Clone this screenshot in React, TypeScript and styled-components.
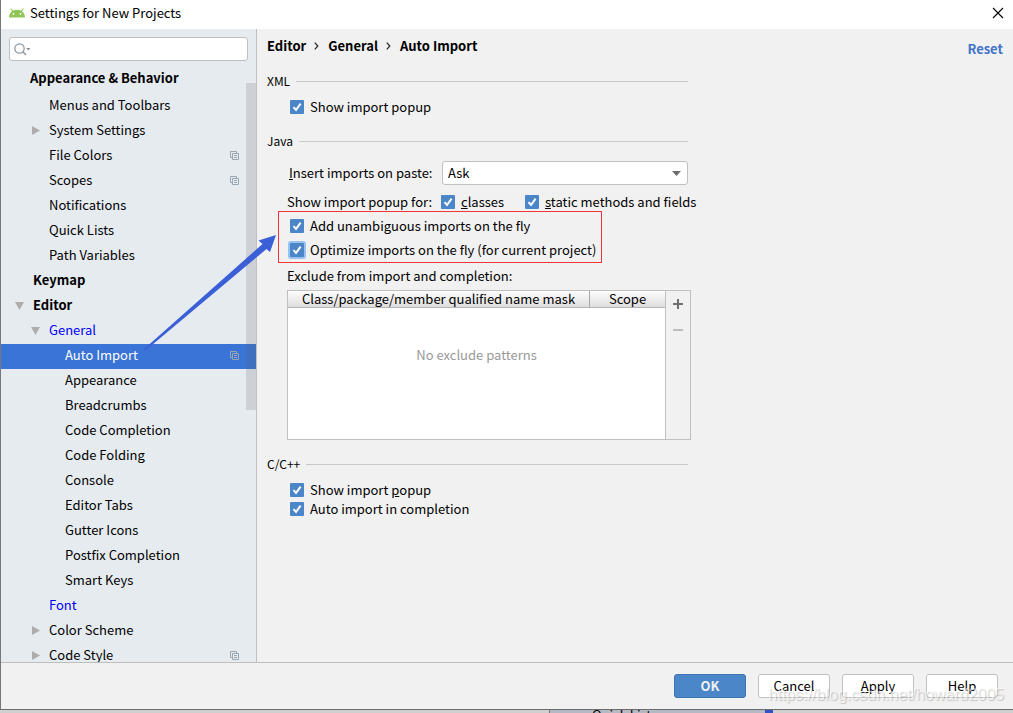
import React from "react";
import styled, { createGlobalStyle, css } from "styled-components";

const GlobalStyle = createGlobalStyle`
  *, *::before, *::after { box-sizing: border-box; }
  body {
    margin: 0;
    font-family: "Noto Sans CJK SC", "Noto Sans", sans-serif;
    font-size: 13px;
    line-height: 18px;
    color: #000;
  }
  button, input, select { font: inherit; color: inherit; }
`;

const Desktop = styled.div`
  position: relative;
  display: flex;
  flex-direction: column;
  height: 100vh;
  padding-bottom: 3px;
  overflow: hidden;
  background: #cfcfd0;
`;

const Dialog = styled.div`
  position: relative;
  z-index: 1;
  flex: 1;
  min-height: 0;
  display: flex;
  flex-direction: column;
  background: #f1f1f1;
  border-left: 1px solid #77787a;
  border-bottom: 1px solid #6c6c6c;
`;

const TitleBar = styled.header`
  display: flex;
  align-items: center;
  gap: 5px;
  height: 29px;
  flex: none;
  padding: 0 9px 3px 8px;
  background: #fff;
`;

const Title = styled.h1`
  flex: 1;
  margin: 0;
  font-size: 13px;
  line-height: 18px;
  font-weight: 400;
`;

const IconButton = styled.button`
  display: flex;
  align-items: center;
  justify-content: center;
  padding: 0;
  border: 0;
  background: none;
`;

const Main = styled.div`
  flex: 1;
  min-height: 0;
  display: flex;
`;

const Sidebar = styled.nav`
  position: relative;
  flex: none;
  width: 256px;
  overflow: hidden;
  background: #e6ebf0;
  border-right: 1px solid #bfc0c2;
`;

const SearchBox = styled.label`
  display: flex;
  align-items: center;
  height: 24px;
  margin: 8px 8px 4px;
  padding: 0 4px;
  background: #fff;
  border: 1px solid #c0c0c0;
  border-radius: 3px;
`;

const SearchInput = styled.input`
  flex: 1;
  min-width: 0;
  border: 0;
  outline: 0;
  background: none;
`;

const Tree = styled.ul`
  margin: 0;
  padding: 0;
  list-style: none;
`;

const indents = { top: 29, root: 32, child: 48, leaf: 64 };
type Level = keyof typeof indents;

const TreeRow = styled.li<{ $level: Level; $selected?: boolean }>`
  display: flex;
  align-items: center;
  height: ${(p) => (p.$level === "top" ? 29 : 25)}px;
  padding-right: 17px;
  padding-bottom: 3px;
  background: ${(p) => (p.$selected ? "#3974d6" : "transparent")};
  color: ${(p) => (p.$selected ? "#fff" : "#000")};
`;

const Twisty = styled.span<{ $level: Level }>`
  display: flex;
  justify-content: flex-end;
  flex: none;
  width: ${(p) => indents[p.$level]}px;
  padding-right: 9px;
`;

const TreeLink = styled.a<{ $bold?: boolean; $modified?: boolean }>`
  flex: 1;
  white-space: nowrap;
  text-decoration: none;
  font-weight: ${(p) => (p.$bold ? 700 : 400)};
  color: ${(p) => (p.$modified ? "#0000ff" : "inherit")};
`;

const ScrollThumb = styled.div`
  position: absolute;
  top: 54px;
  right: 0;
  width: 10px;
  height: 327px;
  background: rgba(94, 94, 94, 0.18);
`;

const Content = styled.main`
  flex: 1;
  min-width: 0;
  padding: 8px 10px 0;
`;

const TopLine = styled.div`
  display: flex;
  justify-content: space-between;
  align-items: flex-start;
  height: 34px;
`;

const Breadcrumb = styled.ol`
  display: flex;
  gap: 9px;
  margin: 0;
  padding: 0;
  list-style: none;
  font-weight: 700;
`;

const Crumb = styled.li`
  display: flex;
  align-items: center;
  gap: 8px;
`;

const ResetLink = styled.a`
  padding-top: 3px;
  font-weight: 700;
  color: #4274c8;
  text-decoration: none;
`;

const Form = styled.form`
  max-width: 424px;
`;

const Section = styled.fieldset`
  margin: 0;
  padding: 0;
  border: 0;
  min-width: 0;
`;

const SectionTitle = styled.legend`
  display: flex;
  align-items: center;
  gap: 6px;
  width: 100%;
  height: 20px;
  padding: 0 3px 0 0;
  font-size: 12px;
  &::after {
    content: "";
    flex: 1;
    height: 1px;
    background: #c9c9c9;
  }
`;

const CheckList = styled.div<{ $top: number; $bottom?: number }>`
  padding: ${(p) => p.$top}px 0 ${(p) => p.$bottom ?? 0}px 23px;
`;

const Check = styled.label<{ $height: number }>`
  display: flex;
  align-items: center;
  gap: 6px;
  height: ${(p) => p.$height}px;
  white-space: nowrap;
`;

const tick = css`
  background-image: url("data:image/svg+xml,%3Csvg xmlns='http://www.w3.org/2000/svg' width='14' height='14'%3E%3Cpath d='M3.5 7.2 6 10 10.6 3.6' fill='none' stroke='white' stroke-width='2'/%3E%3C/svg%3E");
`;

const CheckInput = styled.input.attrs({ type: "checkbox" })<{ $focused?: boolean }>`
  appearance: none;
  flex: none;
  width: 14px;
  height: 14px;
  margin: 0;
  border: 0;
  border-radius: 1px;
  background-color: #fff;
  box-shadow: ${(p) => (p.$focused ? "0 0 0 2px #97c3f3" : "none")};
  &:checked {
    background-color: #4a86c8;
    ${tick}
  }
`;

const PasteRow = styled.div`
  display: grid;
  grid-template-columns: 153px 1fr;
  align-items: center;
  height: 24px;
  margin: 10px 3px 8px 22px;
`;

const SelectWrap = styled.span`
  position: relative;
  display: flex;
`;

const Select = styled.select`
  appearance: none;
  width: 100%;
  height: 24px;
  padding: 0 20px 0 5px;
  background: #fff;
  border: 1px solid #c0c0c0;
  border-radius: 3px;
`;

const SelectArrow = styled.svg`
  position: absolute;
  right: 7px;
  top: 10px;
  pointer-events: none;
`;

const PopupRow = styled.div`
  display: grid;
  grid-template-columns: 154px 84px auto;
  align-items: center;
  height: 18px;
  margin-left: 20px;
  white-space: nowrap;
`;

const Highlight = styled.div`
  width: 324px;
  margin-left: 11px;
  padding: 2px 0 0 11px;
  border: 1px solid #f0353b;
`;

const ExcludeLabel = styled.div`
  height: 27px;
  padding: 4px 0 0 20px;
`;

const ExcludePanel = styled.div`
  display: flex;
  height: 150px;
  margin: 0 0 14px 20px;
  border: 1px solid #c0c0c0;
`;

const ExcludeTable = styled.table`
  flex: 1;
  height: 148px;
  border-collapse: separate;
  border-spacing: 0;
  table-layout: fixed;
  background: #fff;
`;

const HeadCell = styled.th<{ $width?: number }>`
  width: ${(p) => (p.$width ? `${p.$width}px` : "auto")};
  height: 17px;
  padding: 0;
  font-weight: 400;
  line-height: 16px;
  background: linear-gradient(#fdfdfd, #dedede);
  border-bottom: 1px solid #b5b5b5;
  & + & { border-left: 1px solid #a8a8a8; }
`;

const EmptyCell = styled.td`
  padding: 0 0 38px;
  text-align: center;
  color: #999;
`;

const TableTools = styled.div`
  display: flex;
  flex-direction: column;
  align-items: center;
  gap: 16px;
  width: 25px;
  padding-top: 8px;
  border-left: 1px solid #c0c0c0;
`;

const Footer = styled.footer`
  position: relative;
  flex: none;
  display: flex;
  justify-content: flex-end;
  gap: 12px;
  height: 47px;
  padding: 11px 15px 0;
  border-top: 1px solid #bfbfbf;
`;

const Button = styled.button<{ $primary?: boolean }>`
  width: 72px;
  height: 24px;
  padding: 0;
  border: 1px solid ${(p) => (p.$primary ? "#3d75b3" : "#c0c0c0")};
  border-radius: 3px;
  background: ${(p) => (p.$primary ? "#4a86c8" : "#fff")};
  color: ${(p) => (p.$primary ? "#f0f0f0" : "#000")};
  font-weight: ${(p) => (p.$primary ? 700 : 400)};
`;

const Watermark = styled.span`
  position: absolute;
  right: 9px;
  bottom: 4px;
  font-family: "Liberation Sans", Arial, sans-serif;
  font-size: 16px;
  line-height: 20px;
  color: rgba(255, 255, 255, 0.6);
  text-shadow: 1px 1px 1px rgba(90, 90, 90, 0.3);
  pointer-events: none;
`;

const Callout = styled.svg`
  position: absolute;
  left: 142px;
  top: 234px;
  pointer-events: none;
`;

const Behind = styled.div`
  position: absolute;
  left: 549px;
  bottom: 0;
  width: 224px;
  height: 4px;
  padding-left: 42px;
  overflow: hidden;
  background: #b6b9c3;
  border-left: 1px solid #777;
  border-right: 8px solid #3353c4;
  line-height: 12px;
`;

const AndroidIcon = () => (
  <svg width="16" height="10" viewBox="0 0 16 10" aria-hidden="true">
    <path d="M0 9.5C0.2 6.6 1.4 4.4 3.2 3.1L1.2 0.9 1.9 0.3 4.1 2.5Q8 0.8 11.9 2.5L14.1 0.3 14.8 0.9 12.8 3.1C14.6 4.4 15.8 6.6 16 9.5Z" fill="#8fc656" />
    <circle cx="4.5" cy="6" r="0.9" fill="#fff" />
    <circle cx="11.5" cy="6" r="0.9" fill="#fff" />
  </svg>
);

const CopyIcon = () => (
  <svg width="9" height="9" viewBox="0 0 9 9" fill="none" stroke="#9aa7b0" aria-hidden="true">
    <path d="M2 6.5H0.5V0.5H6.5V2M2.5 2.5H8.5V8.5H2.5ZM4 4.5H7M4 6.5H7" />
  </svg>
);

const Caret = ({ open }: { open: boolean }) => (
  <svg width="9" height="9" viewBox="0 0 9 9" fill="#adadad" aria-hidden="true">
    <path d={open ? "M0 1H9L4.5 9Z" : "M1 0L9 4.5 1 9Z"} />
  </svg>
);

interface Node {
  label: string;
  level: Level;
  open?: boolean;
  bold?: boolean;
  modified?: boolean;
  project?: boolean;
  selected?: boolean;
}

const nodes: Node[] = [
  { label: "Appearance & Behavior", level: "top", bold: true },
  { label: "Menus and Toolbars", level: "child" },
  { label: "System Settings", level: "child", open: false },
  { label: "File Colors", level: "child", project: true },
  { label: "Scopes", level: "child", project: true },
  { label: "Notifications", level: "child" },
  { label: "Quick Lists", level: "child" },
  { label: "Path Variables", level: "child" },
  { label: "Keymap", level: "root", bold: true },
  { label: "Editor", level: "root", bold: true, open: true },
  { label: "General", level: "child", open: true, modified: true },
  { label: "Auto Import", level: "leaf", selected: true, project: true },
  { label: "Appearance", level: "leaf" },
  { label: "Breadcrumbs", level: "leaf" },
  { label: "Code Completion", level: "leaf" },
  { label: "Code Folding", level: "leaf" },
  { label: "Console", level: "leaf" },
  { label: "Editor Tabs", level: "leaf" },
  { label: "Gutter Icons", level: "leaf" },
  { label: "Postfix Completion", level: "leaf" },
  { label: "Smart Keys", level: "leaf" },
  { label: "Font", level: "child", modified: true },
  { label: "Color Scheme", level: "child", open: false },
  { label: "Code Style", level: "child", open: false, project: true },
];

const CheckItem = ({ height, focused, children }: { height: number; focused?: boolean; children: React.ReactNode }) => (
  <Check $height={height}>
    <CheckInput defaultChecked $focused={focused} />
    <span>{children}</span>
  </Check>
);

const CrumbArrow = () => (
  <svg width="5" height="8" viewBox="0 0 5 8" fill="none" stroke="#222" strokeWidth="1.2" aria-hidden="true">
    <path d="M0.8 0.7L3.8 4 0.8 7.3" />
  </svg>
);

export default function App() {
  return (
    <Desktop>
      <GlobalStyle />
      <Behind aria-hidden="true">Quick Lists</Behind>
      <Dialog>
        <TitleBar>
          <AndroidIcon />
          <Title>Settings for New Projects</Title>
          <IconButton type="button" aria-label="Close">
            <svg width="12" height="12" viewBox="0 0 12 12" stroke="#000" strokeWidth="1.1">
              <path d="M1 1L11 11M11 1L1 11" />
            </svg>
          </IconButton>
        </TitleBar>
        <Main>
          <Sidebar>
            <SearchBox>
              <svg width="17" height="13" viewBox="0 0 17 13" fill="none" stroke="#8b969e" aria-label="Search">
                <circle cx="5.5" cy="5.5" r="4.7" strokeWidth="1.2" />
                <path d="M8.8 8.8L12 12" strokeWidth="1.6" />
                <path d="M12 5H16.6L14.3 7.6Z" fill="#8b969e" stroke="none" />
              </svg>
              <SearchInput type="text" aria-label="Search settings" />
            </SearchBox>
            <Tree>
              {nodes.map((n, i) => (
                <TreeRow key={i} $level={n.level} $selected={n.selected}>
                  <Twisty $level={n.level}>{n.open !== undefined && <Caret open={n.open} />}</Twisty>
                  <TreeLink href="#" $bold={n.bold} $modified={n.modified}>{n.label}</TreeLink>
                  {n.project && <CopyIcon />}
                </TreeRow>
              ))}
            </Tree>
            <ScrollThumb />
          </Sidebar>
          <Content>
            <TopLine>
              <Breadcrumb>
                <Crumb>Editor<CrumbArrow /></Crumb>
                <Crumb>General<CrumbArrow /></Crumb>
                <Crumb>Auto Import</Crumb>
              </Breadcrumb>
              <ResetLink href="#">Reset</ResetLink>
            </TopLine>
            <Form>
              <Section>
                <SectionTitle>XML</SectionTitle>
                <CheckList $top={7} $bottom={15}>
                  <CheckItem height={18}>Show import popup</CheckItem>
                </CheckList>
              </Section>
              <Section>
                <SectionTitle>Java</SectionTitle>
                <PasteRow>
                  <label htmlFor="paste"><u>I</u>nsert imports on paste:</label>
                  <SelectWrap>
                    <Select id="paste" defaultValue="Ask">
                      <option>Ask</option>
                    </Select>
                    <SelectArrow width="9" height="5" viewBox="0 0 9 5" fill="#6e6e6e">
                      <path d="M0 0H9L4.5 5Z" />
                    </SelectArrow>
                  </SelectWrap>
                </PasteRow>
                <PopupRow>
                  <span>Show import popup for:</span>
                  <CheckItem height={18}><u>c</u>lasses</CheckItem>
                  <CheckItem height={18}><u>s</u>tatic methods and fields</CheckItem>
                </PopupRow>
                <Highlight>
                  <CheckItem height={24}>Add unambiguous imports on the fly</CheckItem>
                  <CheckItem height={24} focused>Optimize imports on the fly (for current project)</CheckItem>
                </Highlight>
                <ExcludeLabel>Exclude from import and completion:</ExcludeLabel>
                <ExcludePanel>
                  <ExcludeTable>
                    <thead>
                      <tr>
                        <HeadCell>Class/package/member qualified name mask</HeadCell>
                        <HeadCell $width={76}>Scope</HeadCell>
                      </tr>
                    </thead>
                    <tbody>
                      <tr>
                        <EmptyCell colSpan={2}>No exclude patterns</EmptyCell>
                      </tr>
                    </tbody>
                  </ExcludeTable>
                  <TableTools>
                    <IconButton type="button" aria-label="Add">
                      <svg width="10" height="10" viewBox="0 0 10 10" fill="#6e6e6e">
                        <path d="M4 0H6V4H10V6H6V10H4V6H0V4H4Z" />
                      </svg>
                    </IconButton>
                    <IconButton type="button" aria-label="Remove">
                      <svg width="10" height="10" viewBox="0 0 10 10" fill="#bdbdbd">
                        <path d="M0 4H10V6H0Z" />
                      </svg>
                    </IconButton>
                  </TableTools>
                </ExcludePanel>
              </Section>
              <Section>
                <SectionTitle>C/C++</SectionTitle>
                <CheckList $top={6}>
                  <CheckItem height={19}>Show import <u>p</u>opup</CheckItem>
                  <CheckItem height={19}>Auto import in completion</CheckItem>
                </CheckList>
              </Section>
            </Form>
          </Content>
        </Main>
        <Footer>
          <Button type="button" $primary>OK</Button>
          <Button type="button">Cancel</Button>
          <Button type="button"><u>A</u>pply</Button>
          <Button type="button">Help</Button>
          <Watermark>https://blog.csdn.net/howard2005</Watermark>
        </Footer>
        <Callout width="136" height="120" viewBox="0 0 136 120">
          <path d="M0.5 115.5L119.5 10 115.5 6.5 133 1 127 18 123.5 15 1.8 117Z" fill="#3a5fd6" />
        </Callout>
      </Dialog>
    </Desktop>
  );
}
